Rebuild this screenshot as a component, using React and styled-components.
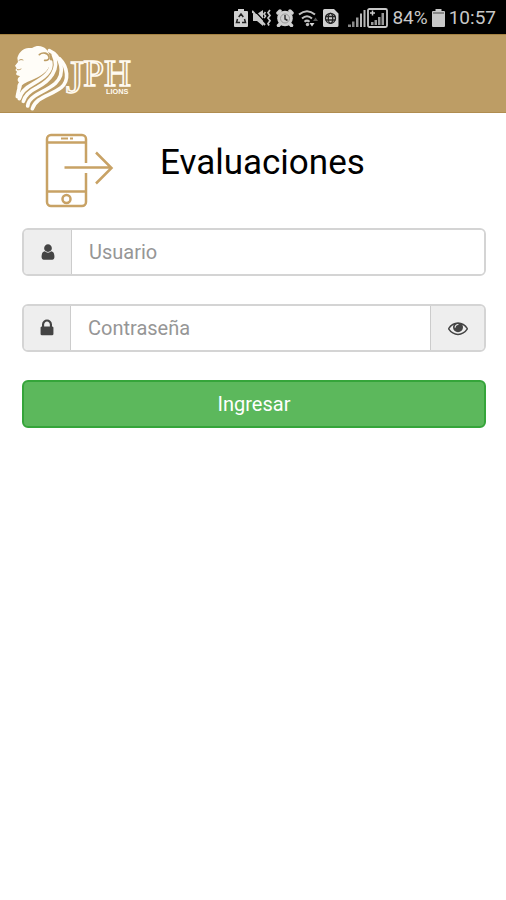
import * as React from 'react';
import styled, { createGlobalStyle } from 'styled-components';

const GlobalStyle = createGlobalStyle`
  *, *::before, *::after {
    box-sizing: border-box;
  }

  body {
    margin: 0;
    background: #fff;
    font-family: Roboto, "Liberation Sans", sans-serif;
    font-size: 20px;
    color: #111;
  }
`;

const StatusBar = styled.div`
  display: flex;
  justify-content: flex-end;
  align-items: center;
  gap: 4px;
  height: 34px;
  padding: 2px 10px 0;
  background: #000;
  color: #c8c8c8;
  font-size: 19px;
  line-height: 24px;

  svg {
    display: block;
    flex: none;
  }
`;

const SignalGroup = styled.div`
  display: flex;
  gap: 1px;
  padding-left: 5px;
`;

const NavBar = styled.header`
  display: flex;
  align-items: flex-start;
  height: 79px;
  padding: 9px 14px 0;
  background: #bd9d65;
  border-top: 1px solid #a58242;
  border-bottom: 1px solid #b08d50;
`;

const Brand = styled.a`
  display: block;

  svg {
    display: block;
  }
`;

const Page = styled.main`
  padding: 20px 20px 20px 22px;
`;

const TitleRow = styled.div`
  display: flex;
  align-items: center;
  gap: 46px;
  height: 76px;
  padding-left: 22px;
`;

const Title = styled.h1`
  margin: 0;
  padding-bottom: 16px;
  font-size: 35px;
  font-weight: 400;
  line-height: 44px;
  color: #000;
`;

const Form = styled.form`
  display: flex;
  flex-direction: column;
  gap: 28px;
  margin-top: 19px;
`;

const InputGroup = styled.div`
  display: flex;
  height: 48px;
  border: 2px solid #d4d4d4;
  border-radius: 6px;
  overflow: hidden;
`;

const Addon = styled.label`
  display: flex;
  justify-content: center;
  align-items: center;
  width: ${props => props.$width};
  background: #eee;
  border-right: 1px solid #ccc;
  color: #444;
`;

const Input = styled.input`
  flex: 1;
  min-width: 0;
  padding: 0 17px;
  border: 0;
  outline: 0;
  background: #fff;
  font: inherit;
  color: #555;

  &::placeholder {
    color: #969696;
    opacity: 1;
  }
`;

const RevealButton = styled.button`
  display: flex;
  justify-content: center;
  align-items: center;
  width: 54px;
  padding: 0;
  border: 0;
  border-left: 1px solid #ccc;
  background: #eee;
  color: #444;
  cursor: pointer;
`;

const SubmitButton = styled.button`
  height: 48px;
  border: 2px solid #35a53a;
  border-radius: 6px;
  background: #5cb85c;
  font: inherit;
  color: #fff;
  cursor: pointer;
`;

const SaverIcon = () => (
  <svg width="14" height="18" viewBox="0 0 14 18" aria-hidden="true">
    <path fill="#d0d0d0" d="M4 0h6v2h3a1 1 0 0 1 1 1v14a1 1 0 0 1-1 1H1a1 1 0 0 1-1-1V3a1 1 0 0 1 1-1h3z" />
    <path fill="none" stroke="#222" strokeWidth="1.5" d="M4.7 8 7 5l2.3 3M3.5 10l-1 3.5H6M10.5 10l1 3.5H8" />
  </svg>
);

const MuteIcon = () => (
  <svg width="20" height="18" viewBox="0 0 20 18" aria-hidden="true">
    <path fill="#c8c8c8" d="M1 5h4l6-4v16l-6-5H1z" />
    <path stroke="#000" strokeWidth="1.2" d="M2 1l12 13" />
    <path stroke="#c8c8c8" strokeWidth="2" d="M0 2l13 14" />
    <path fill="none" stroke="#c8c8c8" strokeWidth="1.7" d="M13.500 3l-1.500 2 1.500 2-1.500 2M18 1l-2 2.700 2 2.700-2 2.700 2 2.700-2 2.700 1 2" />
  </svg>
);

const AlarmIcon = () => (
  <svg width="18" height="18" viewBox="0 0 18 18" aria-hidden="true">
    <path stroke="#d0d0d0" strokeWidth="3.500" strokeLinecap="round" d="M2 4l2-2M16 4l-2-2M4 15l-1.500 1.500M14 15l1.500 1.500" />
    <circle cx="9" cy="9.500" r="7.800" fill="#d0d0d0" />
    <circle cx="9" cy="9.500" r="4.500" fill="none" stroke="#999" strokeWidth="1" />
    <path fill="none" stroke="#333" strokeWidth="1.500" d="M9 6v4l2.500 1.500" />
  </svg>
);

const WifiIcon = () => (
  <svg width="21" height="18" viewBox="0 0 21 18" aria-hidden="true">
    <g fill="none" stroke="#c0c0c0" strokeWidth="2">
      <path d="M1 5.500Q9 -1 17 5.500" />
      <path d="M4 9.500Q9 5 14 9.500" />
      <path d="M6.500 12.800Q9 10.500 11.500 12.800" />
    </g>
    <circle cx="9.500" cy="15.500" r="1.700" fill="#c0c0c0" />
    <path fill="#d8d8d8" d="M11.500 14h5L14 17.500z" />
    <path fill="#555" d="M15 12h5l-2.500-3.500z" />
  </svg>
);

const SimIcon = () => (
  <svg width="16" height="18" viewBox="0 0 16 18" aria-hidden="true">
    <path fill="#d0d0d0" d="M1.500 0H11l4.500 4.500v12A1.500 1.500 0 0 1 14 18H1.500A1.500 1.500 0 0 1 0 16.500v-15A1.500 1.500 0 0 1 1.500 0z" />
    <g fill="none" stroke="#222" strokeWidth="1.300">
      <circle cx="7.500" cy="9.300" r="5" />
      <ellipse cx="7.500" cy="9.300" rx="2.200" ry="5" />
      <path d="M2.500 7.500h10M2.500 11h10" />
    </g>
  </svg>
);

const SignalIcon = () => (
  <svg width="18" height="20" viewBox="0 0 18 20" aria-hidden="true">
    <path fill="#888" d="M0 16.500h3V19H0zM4 13.500h2.500V19H4z" />
    <path fill="#999" d="M8 9.500h2.500V19H8z" />
    <path fill="#b8b8b8" d="M12 5.500h2V19h-2zM15.500 2h2v17h-2z" />
  </svg>
);

const SignalBoxIcon = () => (
  <svg width="21" height="20" viewBox="0 0 21 20" aria-hidden="true">
    <rect x="1" y="1" width="19" height="18" rx="1.500" fill="none" stroke="#c8c8c8" strokeWidth="1.800" />
    <path fill="#999" d="M4 14h2.500v3H4zM7.500 12H10v5H7.500zM11 9h2.500v8H11zM14.500 5H17v12h-2.500z" />
    <path stroke="#ccc" strokeWidth="1.500" d="M3 5h5M5.500 2.500v5" />
  </svg>
);

const BatteryIcon = () => (
  <svg width="13" height="18" viewBox="0 0 13 18" aria-hidden="true">
    <path fill="#c8c8c8" d="M3.500 0h6v2H12a1 1 0 0 1 1 1v14a1 1 0 0 1-1 1H1a1 1 0 0 1-1-1V3a1 1 0 0 1 1-1h2.500z" />
    <path fill="#888" d="M1 3h11v2H1z" />
  </svg>
);

const Logo = () => (
  <svg width="118" height="68" viewBox="42 30 354 204" role="img" aria-label="JPH Lions">
    {/* head */}
    <path
      fill="#fffdf8"
      d="M52 72C56 58 66 46 80 43C88 41 94 43 98 41C110 33 130 35 140 47C148 56 152 72 150 88C147 112 122 128 96 138C78 145 64 153 54 165C50 158 53 150 57 145C50 139 53 132 60 127C56 124 50 125 48 120L51 113L46 108L50 103L45 95L54 84Z"
    />
    {/* mane */}
    <g fill="none" stroke="#fffdf8" strokeWidth="11" strokeLinecap="round">
      <path d="M60 156C56 166 54 176 52 188" />
      <path d="M152 84C158 112 132 131 100 149C76 162 62 176 58 194" />
      <path d="M160 62C182 108 146 142 112 160C86 173 74 186 70 202" />
      <path d="M148 50C184 66 198 118 166 148C146 165 122 174 104 186C92 194 84 206 83 216" />
      <path d="M178 74C204 100 208 140 184 160C162 177 136 184 116 198C106 206 100 214 97 224" />
    </g>
    <g fill="none" stroke="#bd9d65" strokeLinecap="round">
      <path strokeWidth="5" d="M118 62C128 53 144 57 147 68C149 76 142 80 134 79" />
      <path strokeWidth="3" d="M57 79C61 76 65 76 69 78" />
      <path strokeWidth="3" d="M52 107C56 108 60 107 63 105" />
    </g>
    <text fill="none" stroke="#fffaf0" strokeWidth="5" fontFamily="Liberation Serif, serif">
      <tspan x="198" y="176" fontSize="138">J</tspan>
      <tspan x="250" y="155" fontSize="112">PH</tspan>
    </text>
    <text x="318" y="180" fontSize="22" fontWeight="700" fill="#fffaf0" fontFamily="Liberation Sans, sans-serif">LIONS</text>
  </svg>
);

const PhoneIcon = () => (
  <svg width="70" height="76" viewBox="0 0 70 76" fill="none" stroke="#c8a265" strokeWidth="2.500" aria-hidden="true">
    <path d="M42 30V6a4 4 0 0 0-4-4H7a4 4 0 0 0-4 4v63a4 4 0 0 0 4 4h31a4 4 0 0 0 4-4V40M3 9.500h39M3 58.500h39" />
    <circle cx="22.500" cy="66" r="4" />
    <path d="M17 5.500h7M26 5.500h3" strokeWidth="2" />
    <path d="M20.500 34.500H67M52 19.500l15.500 15.500L52 50.500" />
  </svg>
);

const FieldIcon = ({ size = 18, d }) => (
  <svg width={size} height={size} viewBox="0 0 1792 1792" fill="currentColor" aria-hidden="true">
    <path d={d} />
  </svg>
);

const USER = 'M1536 1399q0 109-62.5 187t-150.5 78h-854q-88 0-150.5-78t-62.5-187q0-85 8.5-160.5t31.5-152 58.5-131 94-89 134.5-34.5q131 128 313 128t313-128q76 0 134.5 34.5t94 89 58.5 131 31.5 152 8.5 160.5zm-256-887q0 159-112.5 271.5t-271.5 112.5-271.5-112.5-112.5-271.5 112.5-271.5 271.5-112.5 271.5 112.5 112.5 271.5z';
const LOCK = 'M640 768h512v-192q0-106-75-181t-181-75-181 75-75 181v192zm832 96v576q0 40-28 68t-68 28h-960q-40 0-68-28t-28-68v-576q0-40 28-68t68-28h32v-192q0-184 132-316t316-132 316 132 132 316v192h32q40 0 68 28t28 68z';
const EYE = 'M1664 960q-152-236-381-353 61 104 61 225 0 185-131.5 316.5t-316.5 131.5-316.5-131.5-131.5-316.5q0-121 61-225-229 117-381 353 133 205 333.5 326.5t434.5 121.5 434.5-121.5 333.5-326.5zm-720-384q0-20-14-34t-34-14q-125 0-214.5 89.5t-89.5 214.5q0 20 14 34t34 14 34-14 14-34q0-86 61-147t147-61q20 0 34-14t14-34zm848 384q0 34-20 69-140 230-376.5 368.5t-499.5 138.5-499.5-139-376.5-368q-20-35-20-69t20-69q140-229 376.5-368t499.5-139 499.5 139 376.5 368q20 35 20 69z';

const App = () => {
  const [visible, setVisible] = React.useState(false);

  return (
    <>
      <GlobalStyle />
      <StatusBar>
        <SaverIcon />
        <MuteIcon />
        <AlarmIcon />
        <WifiIcon />
        <SimIcon />
        <SignalGroup>
          <SignalIcon />
          <SignalBoxIcon />
        </SignalGroup>
        <span>84%</span>
        <BatteryIcon />
        <span>10:57</span>
      </StatusBar>
      <NavBar>
        <Brand href="#">
          <Logo />
        </Brand>
      </NavBar>
      <Page>
        <TitleRow>
          <PhoneIcon />
          <Title>Evaluaciones</Title>
        </TitleRow>
        <Form onSubmit={e => e.preventDefault()}>
          <InputGroup>
            <Addon htmlFor="user" $width="48px" aria-label="Usuario">
              <FieldIcon d={USER} />
            </Addon>
            <Input id="user" type="text" placeholder="Usuario" />
          </InputGroup>
          <InputGroup>
            <Addon htmlFor="password" $width="47px" aria-label="Contraseña">
              <FieldIcon size={20} d={LOCK} />
            </Addon>
            <Input id="password" type={visible ? 'text' : 'password'} placeholder="Contraseña" />
            <RevealButton type="button" aria-label="Mostrar contraseña" onClick={() => setVisible(!visible)}>
              <FieldIcon size={20} d={EYE} />
            </RevealButton>
          </InputGroup>
          <SubmitButton type="submit">Ingresar</SubmitButton>
        </Form>
      </Page>
    </>
  );
};

export default App;
